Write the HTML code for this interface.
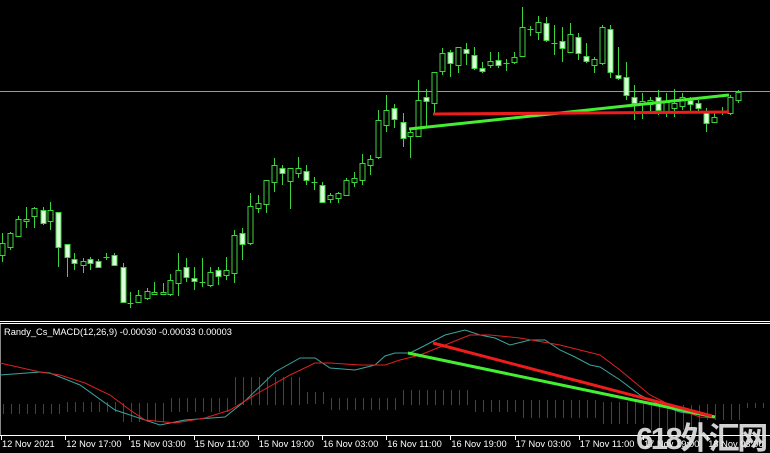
<!DOCTYPE html>
<html><head><meta charset="utf-8"><style>
html,body{margin:0;padding:0;background:#000;width:770px;height:453px;overflow:hidden}
svg{display:block}
text{font-family:"Liberation Sans",sans-serif;font-size:9.3px;fill:#fff}
</style></head><body>
<svg id="s" width="770" height="453" viewBox="0 0 770 453" xmlns="http://www.w3.org/2000/svg" shape-rendering="crispEdges">
<rect width="770" height="453" fill="#000"/>
<line x1="0" y1="91.5" x2="770" y2="91.5" stroke="#999" stroke-width="1"/>
<g id="c"></g>
<line x1="409" y1="129" x2="729" y2="95" stroke="#44ee33" stroke-width="3" shape-rendering="auto"/>
<line x1="433" y1="114" x2="729" y2="112" stroke="#ee1c1c" stroke-width="3" shape-rendering="auto"/>
<line x1="0" y1="321.5" x2="770" y2="321.5" stroke="#fff"/>
<line x1="0" y1="323.5" x2="770" y2="323.5" stroke="#fff"/>
<line x1="0.5" y1="324" x2="0.5" y2="436" stroke="#888"/>
<text x="4" y="335">Randy_Cs_MACD(12,26,9) -0.00030 -0.00033 0.00003</text>
<g id="h"></g>
<polyline fill="none" stroke="#3aa5a0" stroke-width="1" shape-rendering="auto" points="0,375 40,372 50,373 80,385 115,410 160,425 185,420 225,417 245,401 275,372 300,358 315,358 330,368 355,370 375,365 385,356 395,353 410,353 420,348 445,335 465,330 480,335 495,338 510,345 530,340 545,340 560,350 575,357 590,365 600,367 620,380 640,395 660,405 680,412 700,415 715,416"/>
<polyline fill="none" stroke="#e02020" stroke-width="1" shape-rendering="auto" points="0,363 40,372 60,375 85,383 110,395 130,410 145,420 175,423 205,418 230,410 260,392 290,375 315,363 330,363 360,365 385,365 400,360 420,355 450,343 470,335 490,335 520,338 560,345 600,355 620,370 650,395 680,410 700,417 715,418"/>
<line x1="408" y1="353" x2="715" y2="417" stroke="#44ee33" stroke-width="3" shape-rendering="auto"/>
<line x1="433" y1="343" x2="712" y2="416" stroke="#ee1c1c" stroke-width="3" shape-rendering="auto"/>
<line x1="0" y1="435.5" x2="770" y2="435.5" stroke="#fff"/>
<g id="t" stroke="#fff"></g>
<g id="lb"></g>
<text x="636" y="449" style="font-size:31px;font-weight:bold;fill:#e8e8e8;font-family:'Liberation Sans','Noto Sans CJK SC',sans-serif;letter-spacing:-2.5px;opacity:.9">618外汇网</text>
</svg>
<script>
var C=[[1,233,262,243,255,0],[9,232,250,233,247,0],[17,216,236,219,236,0],[25,207,228,219,221,0],[33,207,228,208,216,0],[42,207,225,210,223,1],[49,202,230,210,221,0],[57,212,267,212,247,1],[66,244,277,244,257,1],[73,253,270,259,263,1],[82,258,273,261,265,0],[89,257,270,259,263,1],[97,259,268,261,267,1],[105,253,260,257,258,2],[113,253,266,255,265,1],[122,263,303,267,302,1],[129,292,308,303,304,2],[137,290,303,295,302,0],[146,288,300,291,298,0],[153,282,294,292,294,0],[162,283,294,292,294,0],[169,274,296,280,294,0],[177,253,296,270,283,0],[185,258,282,267,277,1],[193,267,290,278,281,1],[201,258,287,282,283,2],[209,267,287,272,285,0],[217,267,285,270,276,1],[225,257,280,270,275,0],[233,230,283,235,273,0],[241,228,260,233,244,1],[249,193,245,206,243,0],[257,195,213,203,208,0],[265,180,213,180,204,0],[273,158,192,165,182,0],[281,165,185,168,173,1],[289,168,209,168,181,0],[297,157,178,168,173,0],[305,165,185,171,180,1],[313,177,190,182,183,2],[321,182,202,185,202,1],[329,193,203,195,199,0],[337,192,203,193,198,0],[345,178,196,180,195,0],[353,172,187,178,182,0],[361,154,185,163,180,0],[369,155,175,159,165,0],[377,110,159,120,157,0],[385,95,132,110,125,0],[393,104,128,108,119,1],[402,113,147,122,138,1],[409,128,158,132,136,0],[417,80,137,100,136,0],[425,89,127,97,101,1],[433,72,113,72,103,0],[441,48,75,53,71,0],[449,50,77,52,63,1],[457,47,73,47,65,0],[465,43,65,49,53,1],[473,47,70,55,68,1],[481,62,73,68,71,1],[489,52,68,61,65,0],[497,52,68,60,65,1],[505,59,71,63,64,2],[513,52,64,57,62,0],[521,7,57,27,56,0],[529,26,36,29,30,2],[537,16,40,22,32,0],[545,17,42,23,40,1],[553,25,55,43,44,2],[561,27,62,41,48,1],[569,23,53,34,52,0],[577,33,60,37,53,1],[585,43,63,56,61,1],[593,57,73,59,65,0],[601,25,65,27,63,0],[609,25,78,29,72,1],[617,47,80,75,78,1],[625,62,100,77,95,1],[633,85,120,97,103,1],[641,93,119,101,104,0],[649,97,113,100,104,0],[657,90,115,97,110,1],[665,93,117,102,111,0],[673,89,117,103,108,0],[681,93,110,97,106,0],[689,97,112,100,104,1],[697,100,112,103,108,1],[705,108,132,112,123,1],[713,113,123,117,122,0],[721,107,115,111,113,2],[729,95,115,97,113,0],[737,90,103,92,100,0]];
var g=document.getElementById('c'),o='';
C.forEach(function(c){var x=c[0]+1.5;o+='<line x1="'+x+'" y1="'+c[1]+'" x2="'+x+'" y2="'+c[2]+'" stroke="#3ed43e"/>';
if(c[5]==2){o+='<line x1="'+(x-3)+'" y1="'+(c[3]+.5)+'" x2="'+(x+3)+'" y2="'+(c[3]+.5)+'" stroke="#3ed43e"/>';}
else o+='<rect x="'+(x-2.5)+'" y="'+(c[3]+.5)+'" width="5" height="'+Math.max(1,c[4]-c[3])+'" fill="'+(c[5]?'#dcffdc':'#000')+'" stroke="#3ed43e"/>';});
g.innerHTML=o;
var H=document.getElementById('h'),ho='';
for(var x=3;x<770;x+=8){var a=403,b=403;
if(x<60){a=404;b=414}else if(x<120){a=402;b=412}else if(x<170){a=403;b=422}else if(x<230){a=398;b=412}else if(x<300){a=377;b=405}else if(x<325){a=392;b=404}else if(x<400){a=398;b=410}else if(x<470){a=390;b=405}else if(x<520){a=400;b=412}else if(x<600){a=400;b=418}else if(x<650){a=402;b=424}else if(x<700){a=405;b=430}else if(x<740){a=404;b=420}else{a=403;b=408}
ho+='<rect x="'+x+'" y="'+a+'" width="1" height="'+(b-a)+'" fill="#3030e0"/>';}
H.innerHTML=ho;
var L=["12 Nov 2021","12 Nov 17:00","15 Nov 03:00","15 Nov 11:00","15 Nov 19:00","16 Nov 03:00","16 Nov 11:00","16 Nov 19:00","17 Nov 03:00","17 Nov 11:00","17 Nov 19:00","18 Nov 03:00"],to='',lo='';
L.forEach(function(s,i){var x=1+64.2*i;to+='<line x1="'+(Math.round(x)+.5)+'" y1="436" x2="'+(Math.round(x)+.5)+'" y2="440"/>';lo+='<text x="'+(x+1)+'" y="447">'+s+'</text>';});
document.getElementById('t').innerHTML=to;document.getElementById('lb').innerHTML=lo;
</script>
</body></html>
